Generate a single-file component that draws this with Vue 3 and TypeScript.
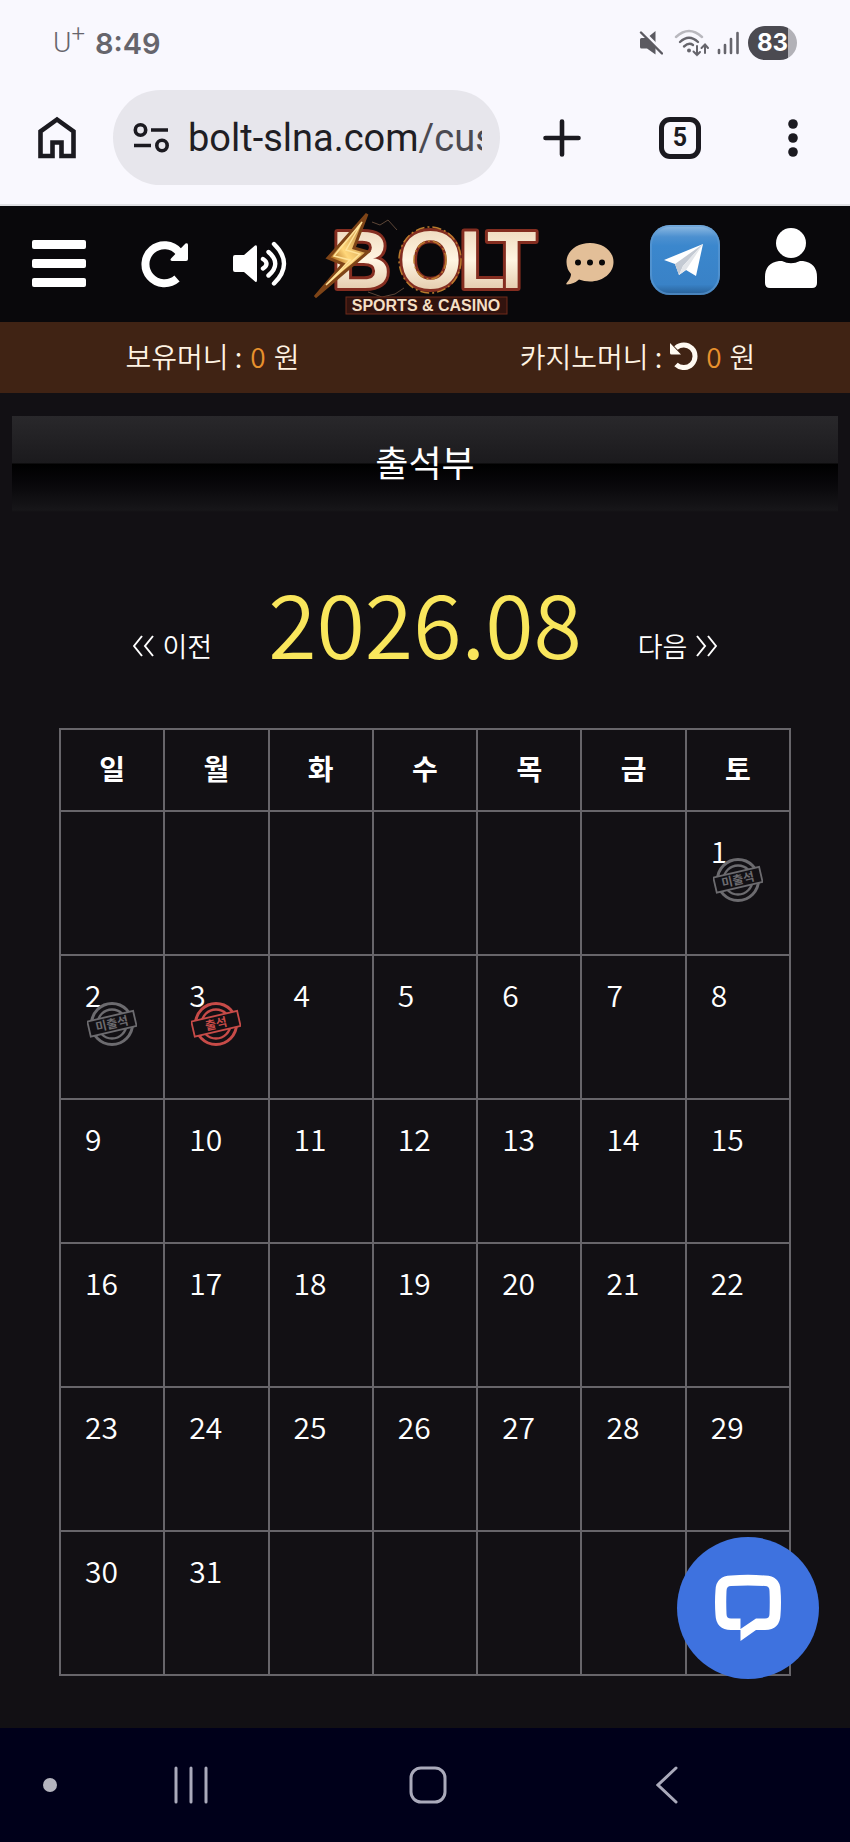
<script setup lang="ts">
type Mark = 'absent' | 'present'
interface Day {
  day: number | null
  mark?: Mark
}

const weekdays: string[] = ['일', '월', '화', '수', '목', '금', '토']
const marks: Record<number, Mark> = { 1: 'absent', 2: 'absent', 3: 'present' }
const firstWeekday = 6
const daysInMonth = 31

const weeks: Day[][] = Array.from({ length: 6 }, (_, w) =>
  Array.from({ length: 7 }, (_, d) => {
    const n = w * 7 + d - firstWeekday + 1
    return n >= 1 && n <= daysInMonth ? { day: n, mark: marks[n] } : { day: null }
  }),
)
</script>

<template>
  <div class="screen">
    <header class="chrome">
      <div class="status">
        <div class="status-left">
          <span class="carrier">U<sup>+</sup></span>
          <span class="clock">8:49</span>
        </div>
        <div class="status-right">
          <svg width="24" height="24" viewBox="0 0 24 24">
            <path d="M1 8.500Q1 7 2.500 7H8L16.500 0V23.500L8 17.500H2.500Q1 17.500 1 16Z" fill="#5b5a61" />
            <path d="M3 -.5L25 21.500" stroke="#f9f8fe" stroke-width="3" />
            <path d="M2 1.500L23 22.500" stroke="#5b5a61" stroke-width="2.400" stroke-linecap="round" />
          </svg>
          <svg class="wifi" width="36" height="28" viewBox="0 0 36 28" fill="none" stroke-linecap="round">
            <path d="M2 8Q15 -4 28 8" stroke="#b9b8be" stroke-width="2.400" />
            <path d="M6 13Q15 4.500 24 13" stroke="#66656c" stroke-width="2.400" />
            <path d="M10 17.500Q15 13 19 16" stroke="#66656c" stroke-width="2.400" />
            <circle cx="15" cy="21.500" r="2" fill="#66656c" />
            <path d="M23 17V26M19.500 22.500L23 26L26 23M31 24V16M27.500 19L31 15.500L34 19" stroke="#66656c" stroke-width="2" />
          </svg>
          <svg class="signal" width="22" height="24" viewBox="0 0 22 24" stroke="#66656c" stroke-width="2.600" stroke-linecap="round">
            <path d="M2 19V22M8 14V22M14 8V22M20.500 2V22" />
          </svg>
          <span class="battery">83</span>
        </div>
      </div>

      <div class="toolbar">
        <button class="tool" aria-label="홈">
          <svg width="40" height="44" viewBox="0 0 40 44">
            <path d="M3.500 40V15.500L20 3.500L36.500 15.500V40H24.500V26.500H15.500V40Z" fill="none" stroke="#1b1a20" stroke-width="4.600" />
          </svg>
        </button>
        <button class="address">
          <svg width="36" height="30" viewBox="0 0 36 30" fill="none" stroke="#1b1a20" stroke-width="3.600">
            <circle cx="7.500" cy="7" r="5.200" />
            <path d="M18 7H35M1 22.500H18" />
            <circle cx="29" cy="22.500" r="5.200" />
          </svg>
          <span class="url">bolt-slna.com<span class="path">/cus</span></span>
        </button>
        <button class="tool" aria-label="새 탭">
          <svg width="38" height="38" viewBox="0 0 38 38">
            <path d="M19 2.500V35.500M2.500 19H35.500" stroke="#1b1a20" stroke-width="4.600" stroke-linecap="round" />
          </svg>
        </button>
        <button class="tool" aria-label="탭 목록"><span class="tabs">5</span></button>
        <button class="tool" aria-label="더보기">
          <svg width="10" height="38" viewBox="0 0 10 38" fill="#1b1a20">
            <circle cx="5" cy="5" r="4.800" /><circle cx="5" cy="19" r="4.800" /><circle cx="5" cy="33" r="4.800" />
          </svg>
        </button>
      </div>
    </header>

    <nav class="site-bar">
      <button aria-label="메뉴">
        <svg width="54" height="48" viewBox="0 0 54 48" fill="#fff">
          <rect width="54" height="9" rx="2" /><rect y="19" width="54" height="9" rx="2" /><rect y="38" width="54" height="9" rx="2" />
        </svg>
      </button>
      <button aria-label="새로고침">
        <svg width="48" height="48" viewBox="0 0 48 48">
          <path d="M36 38.500A19 19 0 1 1 38 12" fill="none" stroke="#fff" stroke-width="8" />
          <path d="M47 4.500V19Q47 21 45 21H31Q28.500 20.500 30 18.500L44.500 3.500Q46.500 2.500 47 4.500Z" fill="#fff" />
        </svg>
      </button>
      <button aria-label="소리">
        <svg width="54" height="48" viewBox="0 0 54 48" fill="none" stroke="#fff" stroke-width="4.400" stroke-linecap="round">
          <path d="M2 15H11L22 5.500Q24 4.500 24 7V40Q24 43 22 41.500L11 32H2Q0 32 0 30V17Q0 15 2 15Z" fill="#fff" stroke="none" />
          <path d="M30 19Q37 23.500 30 28.500M35.500 12Q49 23.500 35.500 35.500M41 4Q61 23.500 41 43.500" />
        </svg>
      </button>
      <a class="logo" href="#" aria-label="BOLT">
        <svg width="226" height="108" viewBox="0 0 226 108">
          <defs>
            <linearGradient id="cream" x1="0" y1="0" x2="0" y2="1">
              <stop offset="0" stop-color="#e9cfb0" /><stop offset=".5" stop-color="#fff5e2" /><stop offset="1" stop-color="#d7b894" />
            </linearGradient>
            <linearGradient id="gold" x1="1" y1="0" x2="0" y2="1">
              <stop offset="0" stop-color="#a76b2b" /><stop offset=".45" stop-color="#ffd77a" /><stop offset=".6" stop-color="#b57325" /><stop offset="1" stop-color="#e5ad59" />
            </linearGradient>
          </defs>
          <path d="M60 12L68 15L76 10L85 20M56 82L70 87L83 84L92 78" fill="none" stroke="#5d4637" stroke-width="1" />
          <text class="word" x="20 87 147 175" y="78">BOLT</text>
          <ellipse cx="118" cy="50" rx="31" ry="33" fill="none" stroke="#b97a2d" stroke-width="1.500" stroke-dasharray="9 3 2 3" />
          <ellipse cx="118" cy="50" rx="16" ry="19" fill="none" stroke="#b97a2d" stroke-width="1.500" stroke-dasharray="9 3 2 3" />
          <path d="M55 4L16 48L31 54L3 87L56 42L42 38Z" fill="url(#gold)" stroke="#7e4417" stroke-width="3" />
          <path d="M50 12L22 46L38 50L14 75L48 44L34 40Z" fill="none" stroke="#ffe399" stroke-width="1.500" />
          <rect x="34" y="87" width="161" height="17" fill="#32130e" stroke="#6e2b1b" />
          <text class="tagline" x="114" y="101" text-anchor="middle">SPORTS &amp; CASINO</text>
        </svg>
      </a>
      <button aria-label="채팅">
        <svg width="48" height="44" viewBox="0 0 48 44">
          <path d="M24 1C37 1 47.500 9 47.500 20S37 39.500 24 39.500Q18 39.500 13 37.500Q8 42 1 42.500Q-.5 42 1 40.500Q5 36 5 32Q.5 27 .5 20C.5 9 11 1 24 1Z" fill="#e3bf98" />
          <g fill="#0a0909"><circle cx="12" cy="20.500" r="3" /><circle cx="24" cy="20.500" r="3" /><circle cx="36" cy="20.500" r="3" /></g>
        </svg>
      </button>
      <button class="raised" aria-label="텔레그램">
        <svg width="70" height="70" viewBox="0 0 70 70">
          <defs>
            <linearGradient id="tile" x1="0" y1="0" x2="0" y2="1">
              <stop offset="0" stop-color="#93bde4" /><stop offset=".17" stop-color="#4c90d0" /><stop offset=".3" stop-color="#3b87cd" /><stop offset=".85" stop-color="#3982c7" /><stop offset="1" stop-color="#275e94" />
            </linearGradient>
          </defs>
          <rect width="70" height="70" rx="20" fill="url(#tile)" />
          <rect x="1" y="1" width="68" height="68" rx="19" fill="none" stroke="#5f9bd3" stroke-width="2" opacity=".6" />
          <path d="M53 19L14 35L25 39L29 50L36 45L46 51Z" fill="#fff" />
          <path d="M53 19L25 39L29 50L33 41Z" fill="#c4cad3" /><path d="M53 19L33 41L29 50L36 45Z" fill="#e3e6ea" />
        </svg>
      </button>
      <button class="raised" aria-label="내 정보">
        <svg width="52" height="64" viewBox="0 0 52 64" fill="#fff">
          <circle cx="26" cy="15" r="15" />
          <path d="M14 33H17Q26 37.500 35 33H38Q52 35 52 49V55Q52 60 47 60H5Q0 60 0 55V49Q0 35 14 33Z" />
        </svg>
      </button>
    </nav>

    <section class="balances">
      <p>보유머니 : <b>0</b> 원</p>
      <p>
        카지노머니 :
        <button class="reload" aria-label="카지노머니 새로고침">
          <svg width="28" height="28" viewBox="0 0 28 28">
            <path d="M6 22.500A11.300 11.300 0 1 0 6 6" fill="none" stroke="#fffaf2" stroke-width="5" />
            <path d="M0 1V11Q0 12.500 1.500 12.500H11Z" fill="#fffaf2" />
          </svg>
        </button>
        <b>0</b> 원
      </p>
    </section>

    <main class="content">
      <h1 class="title">출석부</h1>
      <div class="month-nav">
        <a href="#">
          <svg width="22" height="22" viewBox="0 0 22 22"><path d="M9 1L1 11L9 21M20 1L12 11L20 21" /></svg>
          이전
        </a>
        <h2>2026.08</h2>
        <a href="#">
          다음
          <svg width="22" height="22" viewBox="0 0 22 22"><path d="M2 1L10 11L2 21M13 1L21 11L13 21" /></svg>
        </a>
      </div>
      <table class="calendar">
        <thead>
          <tr><th v-for="name in weekdays" :key="name" scope="col">{{ name }}</th></tr>
        </thead>
        <tbody>
          <tr v-for="(week, i) in weeks" :key="i">
            <td v-for="(cell, j) in week" :key="j">
              <div v-if="cell.day" class="cell">
                <span>{{ cell.day }}</span>
                <svg v-if="cell.mark" class="stamp" :class="cell.mark" width="50" height="46" viewBox="0 0 50 46">
                  <g fill="none" stroke="currentColor">
                    <circle cx="25" cy="23" r="20.500" stroke-width="3" />
                    <circle cx="25" cy="23" r="14.500" stroke-width="2.400" />
                  </g>
                  <g transform="rotate(-13 25 23)">
                    <rect x="1.500" y="15" width="47" height="15.500" fill="#121014" stroke="currentColor" stroke-width="1.800" />
                    <text x="25" y="27" text-anchor="middle" fill="currentColor">{{ cell.mark === 'present' ? '출석' : '미출석' }}</text>
                  </g>
                </svg>
              </div>
            </td>
          </tr>
        </tbody>
      </table>
      <button class="fab" aria-label="상담하기">
        <svg width="66" height="68" viewBox="0 0 66 68">
          <path fill-rule="evenodd" d="M16 1.500Q33 0 50 1.500Q65 2 65.500 16Q66.500 28 65.500 41Q65 55.500 50 56H41L25.500 67V56H16Q1 55.500.5 41Q-.5 28 .5 16Q1 2 16 1.500ZM16 12Q11.500 12 11.500 17Q11 28 11.500 40Q11.500 44.500 16 44.500H25.500V55L41 44.500H50Q54.500 44.500 54.500 40Q55 28 54.500 17Q54.500 12 50 12Q33 11 16 12Z" fill="#fff" />
        </svg>
      </button>
    </main>

    <footer class="system-nav">
      <button aria-label="표시 고정"><svg width="14" height="14"><circle cx="7" cy="7" r="7" fill="#b5b5bf" /></svg></button>
      <button aria-label="최근 앱">
        <svg width="34" height="38"><path d="M2 2V36M17 2V36M32 2V36" stroke="#aaaabb" stroke-width="3" stroke-linecap="round" /></svg>
      </button>
      <button aria-label="홈 화면">
        <svg width="38" height="38"><rect x="2" y="2" width="34" height="34" rx="10" fill="none" stroke="#aaaabb" stroke-width="3" /></svg>
      </button>
      <button aria-label="뒤로">
        <svg width="22" height="38"><path d="M20 2L2 19L20 36" fill="none" stroke="#aaaabb" stroke-width="3" stroke-linecap="round" /></svg>
      </button>
    </footer>
  </div>
</template>

<style>
body {
  margin: 0;
  background: #121014;
}
</style>

<style scoped>
.screen {
  display: flex;
  flex-direction: column;
  min-height: 100vh;
  color: #fff;
  background: #121014;
  font-family: 'Noto Sans CJK KR', 'Noto Sans', sans-serif;
  font-weight: 350;
}

button {
  margin: 0;
  padding: 0;
  border: 0;
  background: none;
  color: inherit;
  font: inherit;
  cursor: pointer;
}

svg {
  display: block;
  flex: none;
}

a {
  color: inherit;
  text-decoration: none;
}

.chrome {
  background: #f9f8fe;
  border-bottom: 2px solid #dfe0e4;
  font-family: Roboto, sans-serif;
}

.status {
  display: flex;
  align-items: center;
  justify-content: space-between;
  height: 86px;
  padding: 0 53px;
  color: #66656c;
}

.status-left,
.status-right {
  display: flex;
  align-items: center;
}

.status-left {
  gap: 10px;
}

.carrier {
  display: flex;
  align-items: flex-start;
  font-size: 28px;
  line-height: 34px;
}

.carrier sup {
  font-size: 24px;
  line-height: 16px;
}

.clock {
  font-family: Inter, sans-serif;
  font-size: 29px;
  font-weight: 600;
}

.wifi {
  margin-left: 11px;
}

.signal {
  margin: 0 9px 0 7px;
}

.battery {
  width: 49px;
  height: 34px;
  border-radius: 17px;
  background: linear-gradient(90deg, #4b4a51 82%, #b2b1b7 82%);
  color: #fff;
  font-family: Inter, sans-serif;
  font-size: 24px;
  font-weight: 700;
  line-height: 34px;
  text-align: center;
}

.toolbar {
  display: grid;
  grid-template-columns: 113px minmax(0, 1fr) 124px 112px 114px;
  align-items: center;
  padding: 4px 0 19px;
}

.tool {
  display: flex;
  align-items: center;
  justify-content: center;
  height: 95px;
}

.address {
  display: flex;
  align-items: center;
  gap: 19px;
  height: 95px;
  padding: 0 18px 0 20px;
  border-radius: 48px;
  background: #e7e6ec;
  color: #1f1e24;
}

.url {
  overflow: hidden;
  white-space: nowrap;
  font-size: 38px;
  font-weight: 400;
  line-height: 48px;
}

.path {
  color: #4b4a51;
}

.tabs {
  box-sizing: border-box;
  width: 42px;
  height: 42px;
  border: 5px solid #1b1a20;
  border-radius: 11px;
  color: #1b1a20;
  font-size: 25px;
  font-weight: 700;
  line-height: 32px;
}

.site-bar {
  display: grid;
  grid-template-columns: 5fr 4fr 4fr 10fr 4fr 4fr 5fr;
  align-items: center;
  justify-items: center;
  height: 116px;
  background: #09080b;
}

.raised {
  padding-bottom: 8px;
}

.logo svg {
  overflow: visible;
}

.word {
  fill: url(#cream);
  stroke: #842d20;
  stroke-width: 6px;
  stroke-linejoin: round;
  paint-order: stroke;
  font-family: 'Liberation Sans', sans-serif;
  font-size: 81px;
  font-weight: 700;
}

.tagline {
  fill: #f4dfc4;
  font-family: 'Liberation Sans', sans-serif;
  font-size: 16px;
  font-weight: 700;
}

.balances {
  display: grid;
  grid-template-columns: 1fr 1fr;
  align-items: center;
  height: 71px;
  background: #402314;
  color: #fff3e3;
  font-size: 28px;
}

.balances p {
  display: flex;
  align-items: center;
  justify-content: center;
  gap: 8px;
  margin: 0;
  padding-bottom: 4px;
  line-height: 40px;
}

.balances b {
  color: #e8912d;
  font-weight: 350;
}

.content {
  position: relative;
  flex: 1;
  padding: 23px 12px 52px;
}

.title {
  margin: 0;
  padding-bottom: 6px;
  background: linear-gradient(#29282b, #1b1a1d 47px, #000 48px, #08070a 68px, #171619 94px, #121014);
  font-size: 36px;
  font-weight: 400;
  line-height: 90px;
  text-align: center;
}

.month-nav {
  display: flex;
  align-items: flex-end;
  justify-content: center;
  gap: 56px;
  margin-top: 44px;
  font-size: 27px;
}

.month-nav a {
  display: flex;
  align-items: center;
  gap: 8px;
  padding-bottom: 20px;
  line-height: 40px;
}

.month-nav path {
  fill: none;
  stroke: #fff;
  stroke-width: 2px;
}

.month-nav h2 {
  margin: 0;
  color: #f9e65c;
  font-size: 88px;
  font-weight: 350;
  line-height: 130px;
}

.calendar {
  width: calc(100% - 94px);
  margin: 42px auto 0;
  border-collapse: collapse;
  table-layout: fixed;
}

.calendar th,
.calendar td {
  padding: 0;
  border: 2px solid #67656a;
}

.calendar th {
  height: 76px;
  padding-bottom: 4px;
  font-size: 28px;
  font-weight: 700;
  line-height: 40px;
}

.calendar td {
  height: 142px;
  vertical-align: top;
}

.cell {
  position: relative;
  padding: 18px 0 0 24px;
  font-size: 30px;
  line-height: 40px;
}

.stamp {
  position: absolute;
  top: 45px;
  left: calc(50% - 25px);
  font-size: 12px;
  font-weight: 700;
}

.absent {
  color: #6c6b6f;
}

.present {
  color: #c74b48;
}

.fab {
  position: absolute;
  right: 31px;
  bottom: 49px;
  display: flex;
  align-items: center;
  justify-content: center;
  width: 142px;
  height: 142px;
  border-radius: 50%;
  background: #3e72df;
}

.system-nav {
  display: grid;
  grid-template-columns: 100fr 181fr 294fr 184fr 91fr;
  align-items: center;
  justify-items: center;
  height: 114px;
  background: #00001a;
}
</style>
